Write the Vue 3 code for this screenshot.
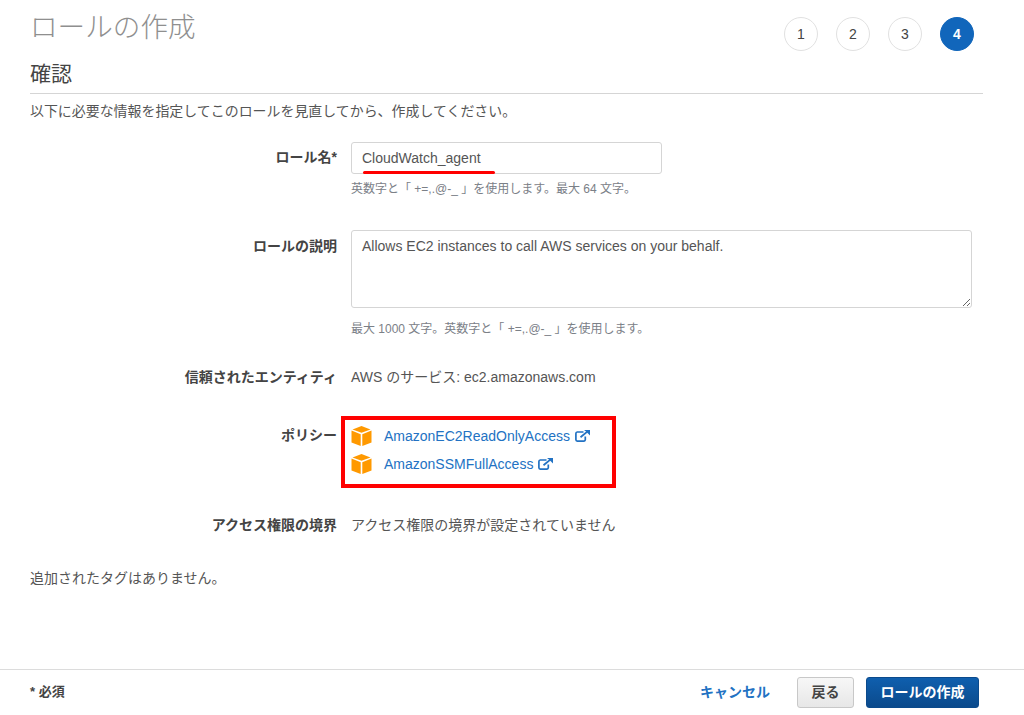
<script setup>
const steps = [1, 2, 3, 4]
const policies = ['AmazonEC2ReadOnlyAccess', 'AmazonSSMFullAccess']
</script>

<template>
  <div class="page">
    <main class="content">
      <header class="top">
        <h1 class="title">ロールの作成</h1>
        <ol class="steps">
          <li v-for="s in steps" :key="s" class="step" :class="{ active: s === 4 }">{{ s }}</li>
        </ol>
      </header>
      <h2 class="section">確認</h2>
      <p class="intro">以下に必要な情報を指定してこのロールを見直してから、作成してください。</p>

      <div class="row row-name">
        <div class="label">ロール名*</div>
        <div class="value">
          <div class="input-wrap">
            <input class="input" type="text" value="CloudWatch_agent" />
            <span class="underline"></span>
          </div>
          <p class="hint">英数字と「 +=,.@-_ 」を使用します。最大 64 文字。</p>
        </div>
      </div>

      <div class="row row-desc">
        <div class="label">ロールの説明</div>
        <div class="value">
          <textarea class="textarea">Allows EC2 instances to call AWS services on your behalf.</textarea>
          <p class="hint">最大 1000 文字。英数字と「 +=,.@-_ 」を使用します。</p>
        </div>
      </div>

      <div class="row row-entity">
        <div class="label">信頼されたエンティティ</div>
        <div class="value plain">AWS のサービス: ec2.amazonaws.com</div>
      </div>

      <div class="row row-policy">
        <div class="label">ポリシー</div>
        <div class="value policies">
          <div v-for="p in policies" :key="p" class="policy">
            <svg class="cube" width="21" height="20" viewBox="0 0 21 20">
              <path fill="#f90" d="M10.5 0 19.5 3.4 10.5 6.8 1.5 3.4Z" />
              <path fill="#f90" d="M.5 4.6 9.7 8.2V20L.5 16.4Z" />
              <path fill="#f90" d="M20.5 4.6 11.3 8.2V20L20.5 16.4Z" />
            </svg>
            <a class="link" href="#">{{ p }}</a>
            <svg class="ext" width="15" height="12" viewBox="0 0 15 12">
              <path fill="none" stroke="#2272c3" stroke-width="1.7" d="M8.5 2H2.2A1.4 1.4 0 0 0 .9 3.4V9.8A1.4 1.4 0 0 0 2.2 11.1H9A1.4 1.4 0 0 0 10.3 9.8V6.5" />
              <path fill="none" stroke="#2272c3" stroke-width="1.8" d="M5.5 7.2 12.6 1.4" />
              <path fill="#2272c3" d="M9 0H15V5.5L13 3.4 11 1.6Z" />
            </svg>
          </div>
        </div>
      </div>

      <div class="row row-boundary">
        <div class="label">アクセス権限の境界</div>
        <div class="value plain">アクセス権限の境界が設定されていません</div>
      </div>

      <p class="tags">追加されたタグはありません。</p>
    </main>

    <footer class="footer">
      <span class="required">* 必須</span>
      <div class="actions">
        <a class="cancel" href="#">キャンセル</a>
        <button class="btn back" type="button">戻る</button>
        <button class="btn primary" type="button">ロールの作成</button>
      </div>
    </footer>
  </div>
</template>

<style>
html, body { margin: 0; background: #fff; }
</style>

<style scoped>
.page {
  width: 1024px;
  height: 715px;
  display: flex;
  flex-direction: column;
  overflow: hidden;
  font-family: "Liberation Sans", "Noto Sans CJK JP", sans-serif;
  font-size: 14px;
  color: #555;
}
.content { flex: 1; padding: 0 41px 0 30px; }
.top { display: flex; justify-content: space-between; align-items: flex-start; height: 57px; }
.title {
  margin: 8px 0 0;
  font-size: 27.6px;
  line-height: 40px;
  font-weight: 300;
  color: #8f8f8f;
}
.steps { display: flex; gap: 18px; list-style: none; margin: 17px 9px 0 0; padding: 0; }
.step {
  box-sizing: border-box;
  width: 34px;
  height: 34px;
  border: 1px solid #e1e1e1;
  border-radius: 50%;
  display: flex;
  align-items: center;
  justify-content: center;
  font-size: 14px;
  color: #444;
}
.step.active { background: #1166bb; border-color: #1166bb; color: #fff; font-weight: 700; }
.section {
  margin: 0;
  height: 36px;
  line-height: 34px;
  font-size: 21px;
  font-weight: 400;
  color: #444;
  border-bottom: 1px solid #d5d5d5;
}
.intro { margin: 7px 0 0; line-height: 20px; font-size: 13.95px; color: #555; }
.row { display: flex; }
.label {
  width: 307px;
  flex: none;
  text-align: right;
  font-weight: 700;
  color: #444;
  line-height: 20px;
}
.value { margin-left: 14px; flex: 1; min-width: 0; }
.plain { line-height: 20px; color: #555; }
.row-name { margin-top: 21px; }
.row-name .label { padding-top: 5px; }
.input-wrap { position: relative; width: 311px; }
.input {
  box-sizing: border-box;
  display: block;
  width: 311px;
  height: 32px;
  padding: 0 10px 1px;
  border: 1px solid #d5d5d5;
  border-radius: 3px;
  font: inherit;
  color: #555;
  outline: none;
}
.underline {
  position: absolute;
  left: 12px;
  top: 29px;
  width: 132px;
  height: 3px;
  border-radius: 2px;
  background: #f00;
}
.hint { margin: 7px 0 0; font-size: 12px; line-height: 16px; color: #7b8087; }
.row-desc { margin-top: 33px; }
.row-desc .label { padding-top: 6px; }
.textarea {
  box-sizing: border-box;
  display: block;
  width: 621px;
  height: 78px;
  padding: 5px 10px;
  border: 1px solid #d5d5d5;
  border-radius: 3px;
  font: inherit;
  line-height: 20px;
  color: #555;
  outline: none;
}
.row-desc .hint { margin-top: 13px; }
.row-entity { margin-top: 30px; }
.row-policy { margin-top: 38px; }
.policies {
  position: relative;
  display: flex;
  flex-direction: column;
  gap: 8px;
  padding-top: 1px;
  min-height: 49px;
}
.policies::before {
  content: "";
  position: absolute;
  left: -10px;
  top: -9px;
  width: 275px;
  height: 72px;
  box-sizing: border-box;
  border: 4px solid #f00;
  pointer-events: none;
}
.policy { display: flex; align-items: center; height: 20px; }
.cube { flex: none; }
.link { margin-left: 12px; color: #2272c3; text-decoration: none; line-height: 20px; }
.ext { margin-left: 5px; flex: none; }
.row-boundary { margin-top: 40px; }
.tags { margin: 33px 0 0; line-height: 20px; color: #555; }
.footer {
  box-sizing: border-box;
  height: 46px;
  flex: none;
  border-top: 1px solid #dcdcdc;
  display: flex;
  align-items: flex-start;
  justify-content: space-between;
  padding: 7px 45px 0 30px;
}
.required { font-weight: 700; color: #444; line-height: 30px; font-size: 13px; }
.actions { display: flex; align-items: center; }
.cancel { color: #2272c3; text-decoration: none; font-weight: 700; margin-right: 27px; padding-bottom: 3px; }
.btn {
  box-sizing: border-box;
  height: 31px;
  border-radius: 3px;
  font: inherit;
  font-weight: 700;
  padding: 0 0 3px;
}
.back {
  width: 57px;
  background: linear-gradient(#f7f7f7, #e7e7e7);
  border: 1px solid #c8c8c8;
  color: #444;
}
.primary {
  width: 113px;
  margin-left: 12px;
  background: linear-gradient(#0f5fae, #0b4a8c);
  border: 1px solid #0b4a8c;
  color: #fff;
}
</style>
